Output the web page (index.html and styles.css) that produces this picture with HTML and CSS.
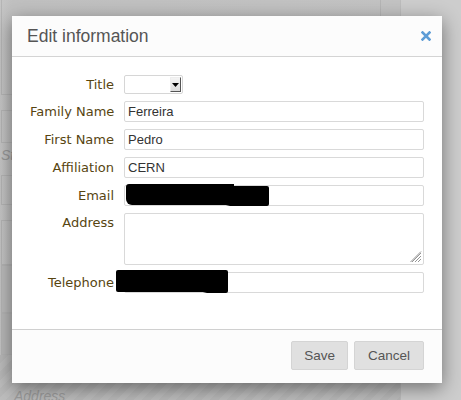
FILE: index.html
```html
<!DOCTYPE html>
<html>
<head>
<meta charset="utf-8">
<link rel="stylesheet" href="styles.css">
</head>
<body>
<div class="page">
  <div class="bg-main">
    <div class="bg-box b1"></div>
    <div class="bg-box b2"></div>
    <div class="bg-text">St</div>
    <div class="bg-box b3"></div>
    <div class="bg-box b4"></div>
    <div class="bg-box b5"></div>
    <div class="bg-box b6"></div>
    <div class="bg-stripe"><span class="bg-ph">Address</span></div>
  </div>
  <div class="bg-side"></div>
</div>

<div class="modal">
  <div class="modal-header">
    <h3 class="modal-title">Edit information</h3>
    <span class="close">
      <svg width="10" height="10" viewBox="0 0 10 10"><path d="M1.5 1.5 L8.5 8.5 M8.5 1.5 L1.5 8.5" stroke="#5d9cd6" stroke-width="2.6" stroke-linecap="square"/></svg>
    </span>
  </div>
  <div class="modal-body">
    <div class="form">
      <label class="lbl">Title</label>
      <div class="select"><span class="sel-arrow"><svg width="7" height="4" viewBox="0 0 7 4"><path d="M0 0 H7 L3.5 4 Z" fill="#000"/></svg></span></div>

      <label class="lbl">Family Name</label>
      <div class="input">Ferreira</div>

      <label class="lbl">First Name</label>
      <div class="input">Pedro</div>

      <label class="lbl">Affiliation</label>
      <div class="input">CERN</div>

      <label class="lbl">Email</label>
      <div class="input redacted-wrap"><span class="redact r-email"></span><span class="redact r-email2"></span></div>

      <label class="lbl lbl-top">Address</label>
      <div class="textarea">
        <svg class="grip" width="12" height="12" viewBox="0 0 12 12"><path d="M11 2 L2 11 M11 5 L5 11 M11 8 L8 11 M11 0.5 L0.5 11" stroke="#8a8a8a" stroke-width="0.9"/></svg>
      </div>

      <label class="lbl">Telephone</label>
      <div class="input redacted-wrap"><span class="redact r-tel"></span><span class="redact r-tel2"></span></div>
    </div>
  </div>
  <div class="modal-footer">
    <button class="btn btn-save">Save</button>
    <button class="btn">Cancel</button>
  </div>
</div>
</body>
</html>
```
FILE: styles.css
```css
html, body {
  margin: 0;
  padding: 0;
}
body {
  width: 461px;
  height: 400px;
  overflow: hidden;
  background: #c9c9c9;
  font-family: "Liberation Sans", Arial, sans-serif;
  position: relative;
}
.page {
  display: flex;
  height: 400px;
}
.bg-main {
  width: 400px;
  border-right: 1px solid #bdbdbd;
  background: linear-gradient(to right, #c6c6c6 0px, #c0c0c0 12px, #c3c3c3 400px);
  display: flex;
  flex-direction: column;
}
.bg-side {
  flex: 1;
  background: #cdcdcd;
}
.bg-box {
  border: 1px solid #b5b5b5;
  margin-left: 1px;
  width: 380px;
  box-sizing: border-box;
}
.b1 { height: 95px; border-top: none; }
.b2 { height: 33px; margin-top: 15px; }
.bg-text {
  font-style: italic;
  color: #9a9a9a;
  font-size: 14px;
  height: 32px;
  line-height: 24px;
  padding-left: 1px;
}
.b3 { height: 30px; }
.b4 { height: 45px; margin-top: 15px; }
.b5 { height: 48px; background: #bcbcbc; }
.b6 { height: 42px; margin-top: 0; background: #b9b9b9; }
.bg-stripe {
  flex: 1;
  background: repeating-linear-gradient(135deg, #b8b8b8 0 6px, #bdbdbd 6px 12px);
  padding-left: 14px;
  position: relative;
}
.bg-ph {
  position: absolute;
  left: 14px;
  bottom: -4px;
  font-style: italic;
  color: #9c9c9c;
  font-size: 14px;
  line-height: 16px;
}

.modal {
  position: absolute;
  left: 12px;
  top: 16px;
  width: 430px;
  background: #fff;
  box-shadow: 0 5px 18px rgba(0, 0, 0, 0.45);
}
.modal-header {
  height: 41px;
  box-sizing: border-box;
  background: #fcfcfc;
  border-bottom: 1px solid #d4d4d4;
  display: flex;
  align-items: center;
  justify-content: space-between;
  padding: 0 11px 0 15px;
}
.modal-title {
  margin: 0;
  font-weight: normal;
  font-size: 17.5px;
  color: #555;
}
.close {
  display: flex;
  width: 10px;
  height: 10px;
}
.modal-body {
  padding: 18px 18px 36px 18px;
}
.form {
  display: grid;
  grid-template-columns: 84px 300px;
  column-gap: 10px;
  row-gap: 7px;
}
.lbl {
  font-family: "DejaVu Sans", Verdana, sans-serif;
  font-size: 13px;
  color: #574511;
  text-align: right;
  align-self: center;
  white-space: nowrap;
}
.lbl-top {
  align-self: start;
  padding-top: 2px;
}
.select {
  width: 59px;
  height: 19px;
  box-sizing: border-box;
  border: 1px solid #d6d6d6;
  border-radius: 2px;
  background: #fff;
  display: flex;
  justify-content: flex-end;
  padding: 1px;
}
.sel-arrow {
  width: 11px;
  height: 15px;
  box-sizing: border-box;
  background: linear-gradient(#f4f4f4, #dcdcdc);
  border-right: 1px solid #555;
  border-bottom: 1px solid #555;
  border-top: 1px solid #eee;
  border-left: 1px solid #eee;
  display: flex;
  align-items: center;
  justify-content: center;
}
.input {
  height: 21px;
  box-sizing: border-box;
  border: 1px solid #d9d9d9;
  border-radius: 2px;
  font-size: 13px;
  color: #333;
  padding: 0 3px;
  line-height: 19px;
}
.redacted-wrap {
  position: relative;
}
.redact {
  position: absolute;
  background: #000;
}
.r-email {
  left: 1px;
  top: -2px;
  width: 108px;
  height: 21px;
  border-radius: 3px 0 0 6px;
}
.r-email2 {
  left: 95px;
  top: 0px;
  width: 49px;
  height: 20px;
  border-radius: 10px 2px 2px 10px;
}
.r-tel {
  left: -9px;
  top: -3px;
  width: 95px;
  height: 22px;
  border-radius: 2px 0 0 2px;
}
.r-tel2 {
  left: 72px;
  top: -3px;
  width: 31px;
  height: 23px;
  border-radius: 4px 2px 2px 10px;
}
.textarea {
  height: 52px;
  box-sizing: border-box;
  border: 1px solid #d9d9d9;
  border-radius: 2px;
  position: relative;
}
.grip {
  position: absolute;
  right: 1px;
  bottom: 1px;
}
.modal-footer {
  border-top: 1px solid #d0d0d0;
  background: #fcfcfc;
  display: flex;
  justify-content: flex-end;
  gap: 6px;
  padding: 11px 18px 13px 18px;
}
.btn {
  font-family: "Liberation Sans", Arial, sans-serif;
  font-size: 13.5px;
  color: #555;
  background: #e0e0e0;
  border: 1px solid #d4d4d4;
  border-radius: 2px;
  height: 29px;
  padding: 0 13px;
  margin: 0;
}
.btn-save {
  padding: 0 12px;
}
```
